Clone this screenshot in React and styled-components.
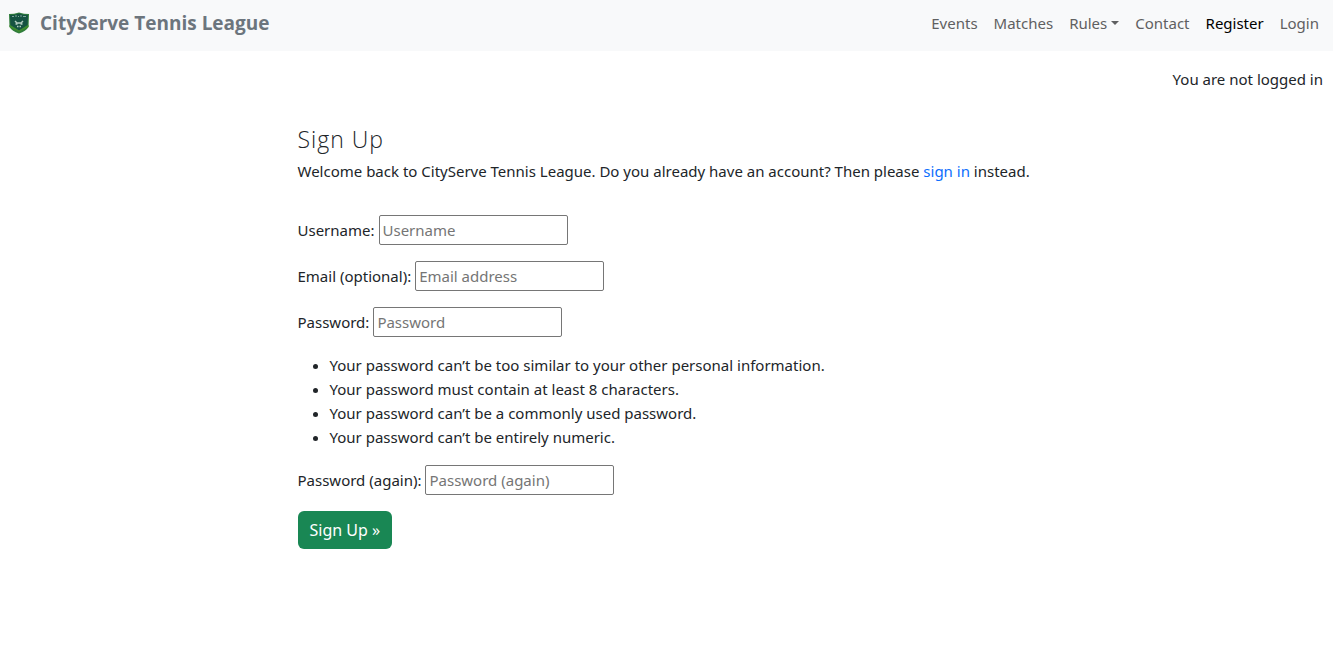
import React from 'react';
import styled, { createGlobalStyle } from 'styled-components';

const GlobalStyle = createGlobalStyle`
  *, *::before, *::after { box-sizing: border-box; }
  body {
    margin: 0;
    background: #fff;
    color: #212529;
    font-family: 'Segoe UI', 'Noto Sans', 'Open Sans', sans-serif;
    font-size: 15px;
    line-height: 24px;
  }
`;

const Navbar = styled.nav`
  display: flex;
  flex-wrap: wrap;
  align-items: center;
  justify-content: space-between;
  padding: 8px 14px 13px 8px;
  background: #f8f9fa;
`;

const Brand = styled.a`
  display: flex;
  align-items: center;
  gap: 10px;
  color: #6c757d;
  font-family: 'Segoe UI', 'Open Sans', sans-serif;
  font-size: 19px;
  font-weight: 700;
  line-height: 30px;
  text-decoration: none;
`;

const NavList = styled.ul`
  display: flex;
  flex-wrap: wrap;
  gap: 16px;
  margin: 0;
  padding: 0;
  list-style: none;
`;

const NavLink = styled.a`
  display: flex;
  align-items: center;
  gap: 4px;
  color: ${({ $active }) => ($active ? '#000' : '#5f6061')};
  text-decoration: none;
`;

const Caret = styled.span`
  border-top: 4px solid;
  border-right: 4px solid transparent;
  border-left: 4px solid transparent;
`;

const Status = styled.p`
  margin: 16px 10px 32px;
  text-align: right;
`;

const Container = styled.main`
  display: grid;
  grid-template-columns: 2fr 8fr 2fr;
  max-width: 1140px;
  margin: 0 auto;
`;

const Content = styled.section`
  grid-column: 2;
  padding: 0 11px;
`;

const Title = styled.h1`
  margin: 0 0 4px;
  font-family: 'Open Sans', sans-serif;
  font-size: 23px;
  font-weight: 300;
  line-height: 32px;
  letter-spacing: 1px;
`;

const Intro = styled.p`
  margin: 0 0 32px;
`;

const TextLink = styled.a`
  color: #0d6efd;
  text-decoration: none;
`;

const Form = styled.form`
  display: flex;
  flex-direction: column;
  align-items: flex-start;
  gap: 16px;
`;

const FieldRow = styled.div`
  display: flex;
  flex-wrap: wrap;
  align-items: center;
  column-gap: 4px;
`;

const Input = styled.input`
  width: 189px;
  height: 30px;
  padding: 1px 3px;
  border: 1px solid #767676;
  border-radius: 2px;
  background: #fff;
  color: #212529;
  font: inherit;

  &::placeholder { color: #757575; }
`;

const Hints = styled.ul`
  margin: 0;
  padding-left: 32px;
`;

const SubmitButton = styled.button`
  height: 38px;
  padding: 0 12px;
  border: 0;
  border-radius: 6px;
  background: #198754;
  color: #fff;
  font: inherit;
  font-size: 16px;
  cursor: pointer;
`;

const Logo = () => (
  <svg width="22" height="22" viewBox="0 0 22 22" aria-hidden="true">
    <path d="M1 2 Q6 2 11 0.5 Q16 2 21 2 L20.5 15 Q18 19 11 21.5 Q4 19 1.5 15 Z" fill="#2f7d3b" />
    <path d="M2 3 Q7 3 11 1.5 Q15 3 20 3 L19.5 13 L11 18.5 L2.5 13 Z" fill="#155342" />
    <path d="M1.5 13 L11 18.5 L20.5 13 V15 L11 20 L1.5 15 Z" fill="#3f8c2d" />
    <path d="M4 4.5h2M7 4h2M10 4.5h1M12 4h2M15 4.5h3" stroke="#7fa898" strokeWidth="1" />
    <path d="M7 9 L9 11 H13 L15 9 M7.5 12h2M12.5 12h2M9 14.5h1.5M11.5 14.5h1.5" fill="none" stroke="#b4cec1" strokeWidth="1.4" />
  </svg>
);

const navItems = [
  { label: 'Events' },
  { label: 'Matches' },
  { label: 'Rules', menu: true },
  { label: 'Contact' },
  { label: 'Register', active: true },
  { label: 'Login' },
];

const hints = [
  'Your password can’t be too similar to your other personal information.',
  'Your password must contain at least 8 characters.',
  'Your password can’t be a commonly used password.',
  'Your password can’t be entirely numeric.',
];

const Field = ({ id, label, type = 'text', placeholder }) => (
  <FieldRow>
    <label htmlFor={id}>{label}</label>
    <Input id={id} type={type} placeholder={placeholder} />
  </FieldRow>
);

export default function App() {
  return (
    <>
      <GlobalStyle />
      <Navbar>
        <Brand href="#"><Logo />CityServe Tennis League</Brand>
        <NavList>
          {navItems.map(({ label, menu, active }) => (
            <li key={label}>
              <NavLink href="#" $active={active}>
                {label}
                {menu && <Caret />}
              </NavLink>
            </li>
          ))}
        </NavList>
      </Navbar>
      <Status>You are not logged in</Status>
      <Container>
        <Content>
          <Title>Sign Up</Title>
          <Intro>
            Welcome back to CityServe Tennis League. Do you already have an account? Then please{' '}
            <TextLink href="#">sign in</TextLink> instead.
          </Intro>
          <Form>
            <Field id="username" label="Username:" placeholder="Username" />
            <Field id="email" label="Email (optional):" type="email" placeholder="Email address" />
            <Field id="password" label="Password:" type="password" placeholder="Password" />
            <Hints>
              {hints.map((hint) => <li key={hint}>{hint}</li>)}
            </Hints>
            <Field id="password-again" label="Password (again):" type="password" placeholder="Password (again)" />
            <SubmitButton type="button">Sign Up »</SubmitButton>
          </Form>
        </Content>
      </Container>
    </>
  );
}
